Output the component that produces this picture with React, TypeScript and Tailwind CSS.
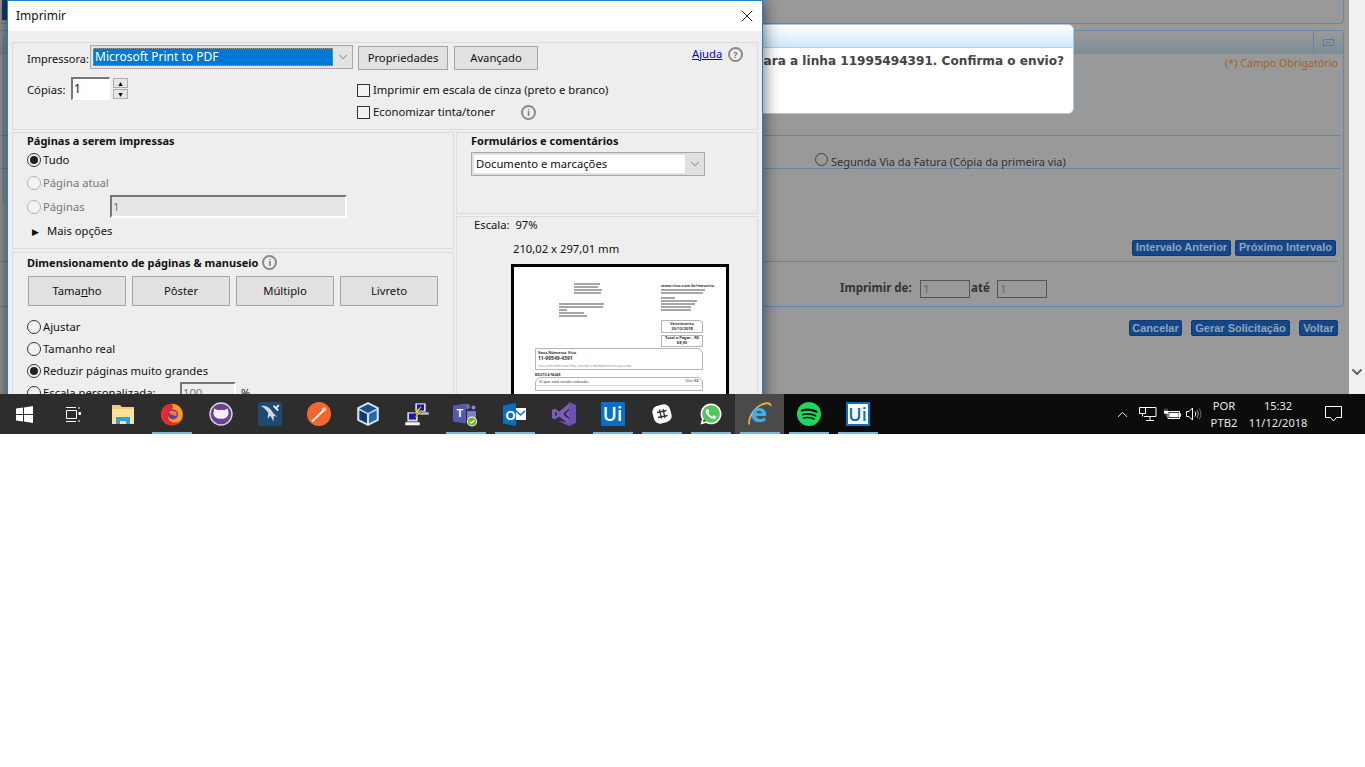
import * as React from "react"
import { ChevronDown, ChevronUp, X } from "lucide-react"
import { FaWhatsapp } from "react-icons/fa"

function Radio({ checked, disabled }: { checked?: boolean; disabled?: boolean }) {
  return (
    <span
      className={
        "flex h-[14px] w-[14px] shrink-0 items-center justify-center rounded-full border " +
        (disabled ? "border-[#b4b4b4] bg-[#f4f4f4]" : "border-[#333333] bg-[#f2f2f2]")
      }
    >
      {checked && <span className="h-2 w-2 rounded-full bg-[#222222]" />}
    </span>
  )
}

function RadioRow({ label, checked, disabled }: { label: string; checked?: boolean; disabled?: boolean }) {
  return (
    <div className={"flex h-[22px] items-center gap-[2px] " + (disabled ? "text-[#777777]" : "")}>
      <Radio checked={checked} disabled={disabled} />
      <span>{label}</span>
    </div>
  )
}

function Check({ label }: { label: string }) {
  return (
    <div className="flex h-[22px] items-center gap-[3px]">
      <span className="h-[13px] w-[13px] shrink-0 border border-[#333333] bg-[#f2f2f2]" />
      <span>{label}</span>
    </div>
  )
}

function InfoIcon({ glyph = "i" }: { glyph?: string }) {
  return (
    <span className="flex h-[15px] w-[15px] shrink-0 items-center justify-center rounded-full border-2 border-[#8a8a8a] text-[9px] leading-none font-bold text-[#777777]">
      {glyph}
    </span>
  )
}

function FlatButton({ className, children }: { className: string; children: React.ReactNode }) {
  return (
    <div className={"flex items-center justify-center border border-[#a4a4a4] bg-[#e1e1e1] " + className}>
      {children}
    </div>
  )
}

function PrintDialog() {
  return (
    <div className="absolute top-0 left-[7px] h-[420px] w-[756px] border-x border-t border-[#1883d7] bg-[#eeeeee] shadow-[0_0_16px_rgba(0,0,0,0.65)]">
      <div className="flex h-[30px] items-center justify-between bg-white pr-[5px] pl-2 text-[12px] text-[#111111]">
        <span>Imprimir</span>
        <X size={20} strokeWidth={1} className="text-black" />
      </div>

      <div className="flex flex-col gap-[2px] pt-[11px] pl-1 text-[11.25px] leading-none text-[#111111]">
        {/* Impressora */}
        <div className="h-[88px] w-[746px] border border-[#dcdcdc] pt-[2px] pl-[14px]">
          <div className="flex items-start">
            <span className="w-[63px] pt-[8px] text-[11px]">Impressora:</span>
            <div className="flex h-[24px] w-[263px] items-center border border-[#a8a8a8] bg-[#e3e3e3] pl-[2px]">
              <span className="flex h-[18px] w-[240px] items-center border border-dotted border-[#f08a24] bg-[#0078d7] pl-[1px] text-[12px] text-white">
                Microsoft Print to PDF
              </span>
              <ChevronDown size={14} strokeWidth={1} className="ml-[3px] text-[#333333]" />
            </div>
            <FlatButton className="mt-[1px] ml-[5px] h-[24px] w-[90px]">Propriedades</FlatButton>
            <FlatButton className="mt-[1px] ml-[6px] h-[24px] w-[84px]">Avançado</FlatButton>
            <a className="mt-[3px] ml-[154px] w-[31px] text-[#0000ee] underline">Ajuda</a>
            <span className="mt-[2px] ml-[5px]"><InfoIcon glyph="?" /></span>
          </div>
          <div className="mt-[7px] flex items-start">
            <div className="flex w-[330px] items-start">
              <span className="w-[44px] pt-[7px]">Cópias:</span>
              <div className="flex h-[23px] w-[39px] items-center border border-t-2 border-l-2 border-[#777777] border-r-white border-b-white bg-white pl-[1px] text-[12px]">
                1
              </div>
              <div className="mt-[1px] ml-[3px] flex flex-col gap-[1px]">
                <span className="flex h-[10px] w-[15px] items-center justify-center border border-[#adadad] bg-[#e6e6e6] text-[7px] text-black">▲</span>
                <span className="flex h-[10px] w-[15px] items-center justify-center border border-[#adadad] bg-[#e6e6e6] text-[7px] text-black">▼</span>
              </div>
            </div>
            <div className="mt-[2px] flex flex-col">
              <Check label="Imprimir em escala de cinza (preto e branco)" />
              <div className="flex items-center">
                <Check label="Economizar tinta/toner" />
                <span className="ml-[26px]"><InfoIcon /></span>
              </div>
            </div>
          </div>
        </div>

        <div className="flex gap-[2px]">
          {/* Coluna esquerda */}
          <div className="flex w-[442px] flex-col gap-[3px]">
            <div className="h-[117px] border border-[#dcdcdc] pl-[14px]">
              <div className="pt-[2px] text-[11px] font-bold">Páginas a serem impressas</div>
              <div className="mt-[3px]"><RadioRow label="Tudo" checked /></div>
              <div className="mt-[1px]"><RadioRow label="Página atual" disabled /></div>
              <div className="mt-[1px] flex items-center">
                <div className="w-[83px]"><RadioRow label="Páginas" disabled /></div>
                <div className="flex h-[23px] w-[237px] items-center border-2 border-[#777777] border-r-white border-b-white bg-[#e6e6e6] pl-[1px] text-[#777777]">
                  1
                </div>
              </div>
              <div className="mt-[4px] flex h-[18px] items-center pl-[5px]">
                <span className="text-[9px] text-black">▶</span>
                <span className="ml-[8px]">Mais opções</span>
              </div>
            </div>
            <div className="h-[150px] border border-[#dcdcdc] pl-[14px]">
              <div className="flex h-[17px] items-center pt-[1px] text-[11px] font-bold">
                <span>Dimensionamento de páginas &amp; manuseio</span>
                <span className="ml-[4px] font-normal"><InfoIcon /></span>
              </div>
              <div className="mt-[6px] flex gap-[6px] pl-[1px]">
                <FlatButton className="h-[30px] w-[98px]">
                  <span>Tama<u>n</u>ho</span>
                </FlatButton>
                <FlatButton className="h-[30px] w-[98px]">Pôster</FlatButton>
                <FlatButton className="h-[30px] w-[98px]">Múltiplo</FlatButton>
                <FlatButton className="h-[30px] w-[98px]">Livreto</FlatButton>
              </div>
              <div className="mt-[10px]"><RadioRow label="Ajustar" /></div>
              <RadioRow label="Tamanho real" />
              <RadioRow label="Reduzir páginas muito grandes" checked />
              <div className="flex items-center">
                <div className="w-[153px]"><RadioRow label="Escala personalizada:" /></div>
                <div className="flex h-[22px] w-[56px] items-center border-2 border-[#777777] border-r-white border-b-white pl-[1px] text-[#777777]">
                  100
                </div>
                <span className="ml-[5px]">%</span>
              </div>
            </div>
          </div>

          {/* Coluna direita */}
          <div className="flex w-[302px] flex-col gap-[2px]">
            <div className="h-[82px] border border-[#dcdcdc] pl-[14px]">
              <div className="pt-[2px] text-[11px] font-bold">Formulários e comentários</div>
              <div className="mt-[6px] flex h-[24px] w-[234px] items-center border border-[#a8a8a8] bg-[#e0e0e0] pl-[2px]">
                <span className="flex h-[18px] w-[211px] items-center bg-white pl-[2px]">Documento e marcações</span>
                <ChevronDown size={14} strokeWidth={1} className="ml-[3px] text-[#333333]" />
              </div>
            </div>
            <div className="h-[180px] border border-[#dcdcdc]">
              <div className="pt-[2px] pl-[17px]">Escala:&nbsp; 97%</div>
              <div className="mt-[13px] pl-[56px]">210,02 x 297,01 mm</div>
              <div className="mt-[9px] ml-[54px] h-[140px] w-[218px] border-[3px] border-black bg-white">
                <PreviewDoc />
              </div>
            </div>
          </div>
        </div>
      </div>
    </div>
  )
}

function Greek({ widths }: { widths: number[] }) {
  return (
    <div className="flex flex-col gap-[1px]">
      {widths.map((w, i) => (
        <div key={i} className="h-[2px] bg-[#a6a6a6]" style={{ width: w }} />
      ))}
    </div>
  )
}

function PreviewDoc() {
  return (
    <div className="relative pt-4 pr-[23px] pl-[21px] text-[4px] leading-[5px] text-[#333333]">
      <div className="flex items-start pl-[39px]">
        <Greek widths={[26, 24, 28, 27]} />
        <div className="ml-[59px] font-bold whitespace-nowrap">
          <div>www.vivo.com.br/meuvivo</div>
          <div className="mt-[1px]"><Greek widths={[44, 42]} /></div>
          <div className="mt-[3px]"><Greek widths={[14, 36, 34, 30, 30]} /></div>
        </div>
      </div>
      <div className="-mt-[8px] w-[60px] pl-[24px]">
        <Greek widths={[45, 44, 8, 25, 28]} />
      </div>
      <div className="mt-[3px] ml-[126px] flex h-[13px] w-[42px] flex-col items-center justify-center rounded-tr border border-[#b5b5b5] text-center font-bold">
        <span className="leading-[4px]">Vencimento</span>
        <span className="leading-[5px]">20/12/2018</span>
      </div>
      <div className="mt-[2px] ml-[126px] flex h-[12px] w-[42px] flex-col items-center justify-center border border-[#b5b5b5] text-center font-bold">
        <span className="leading-[4px]">Total a Pagar - R$</span>
        <span className="leading-[5px]">68,90</span>
      </div>
      <div className="mt-[1px] h-[22px] w-[168px] rounded-tr-md border border-[#b5b5b5] pt-[2px] pl-[2px] font-bold">
        <div className="leading-[4px]">Seus Números Vivo</div>
        <div className="text-[5px] leading-[6px]">11-99549-4391</div>
        <div className="mt-[3px] text-[3px] leading-[4px] font-normal text-[#888888]">Caso você tenha essa linha, consulte o detalhamento da sua conta</div>
      </div>
      <div className="mt-[3px] text-[3px] leading-[4px] font-bold">BOLETO A PAGAR</div>
      <div className="h-[14px] w-[168px] rounded-t-md border border-[#b5b5b5]">
        <div className="flex h-[8px] items-center justify-between border-b border-[#dddddd] px-[3px]">
          <span>O que está sendo cobrado</span>
          <span className="text-[3px]">Valor (R$)</span>
        </div>
      </div>
    </div>
  )
}

function PageBehind() {
  return (
    <div className="flex h-[394px] w-[1349px] flex-col bg-[#999999] text-[11px] leading-none text-[#333333]">
      <div className="h-6 w-[1344px] rounded-br border-r border-b border-[#6785a8]" />
      <div className="mt-[6px] h-[277px] w-[1344px] rounded-tr rounded-br border-r border-b border-[#6785a8]">
        <div className="flex h-[24px] justify-end border-t border-[#6785a8] bg-gradient-to-b from-[#9a9a9a] to-[#7e8c93]">
          <div className="flex w-[30px] items-center justify-center border-l border-[#6785a8]">
            <span className="flex h-[7px] w-[11px] items-center justify-center border border-[#5a7da5]">
              <span className="h-px w-[5px] bg-[#5a7da5]" />
            </span>
          </div>
        </div>
        <div className="pt-[4px] pr-[5px] text-right text-[10.75px] text-[#a2641c]">(*) Campo Obrigatório</div>
        <div className="mt-[66px] mr-[2px] border-b border-[#6785a8]" />
        <div className="flex h-[32px] items-end pb-[1px] pl-[815px]">
          <span className="mb-[1px] h-[13px] w-[13px] rounded-full border border-[#444444]" />
          <span className="ml-[3px]">Segunda Via da Fatura (Cópia da primeira via)</span>
        </div>
        <div className="mr-[2px] border-b border-[#6785a8]" />
        <div className="mt-[71px] flex justify-end gap-[4px] pr-[7px]">
          <PageButton className="w-[99px]">Intervalo Anterior</PageButton>
          <PageButton className="w-[101px]">Próximo Intervalo</PageButton>
        </div>
        <div className="mt-[5px] mr-[5px] border-b border-[#6785a8]" />
        <div className="flex h-[36px] items-start pt-[20px] pl-[840px] text-[11.5px] font-bold">
          <span className="w-[80px]">Imprimir de:</span>
          <span className="-mt-[2px] flex h-[18px] w-[50px] items-center border border-[#555555] pl-[2px] font-normal text-[#666666]">1</span>
          <span className="w-[27px] pl-px">até</span>
          <span className="-mt-[2px] flex h-[18px] w-[50px] items-center border border-[#555555] pl-[2px] font-normal text-[#666666]">1</span>
        </div>
      </div>
      <div className="mt-[13px] flex justify-end gap-[9px] pr-[11px]">
        <PageButton className="w-[53px]">Cancelar</PageButton>
        <PageButton className="w-[99px]">Gerar Solicitação</PageButton>
        <PageButton className="w-[39px]">Voltar</PageButton>
      </div>
    </div>
  )
}

function PageButton({ className, children }: { className: string; children: React.ReactNode }) {
  return (
    <span className={"flex h-[16px] items-center justify-center rounded-[2px] border border-[#0c3a74] bg-[#14478a] font-['Liberation_Sans',sans-serif] text-[11px] font-bold text-[#93a2b6] " + className}>
      {children}
    </span>
  )
}

function MessageBox() {
  return (
    <div className="absolute top-6 left-[300px] h-[90px] w-[774px] overflow-hidden rounded-md border border-[#a9c9ea] bg-white">
      <div className="h-[23px] border-b border-[#a9d3ee] bg-gradient-to-b from-white to-[#cde8f7]" />
      <div className="pt-[4px] pr-[9px] text-right font-['DejaVu_Sans',sans-serif] text-[12.1px] font-bold text-[#444444]">
        para a linha 11995494391. Confirma o envio?
      </div>
    </div>
  )
}

/* icones da barra de tarefas */
const icons: { key: string; on?: boolean; active?: boolean; node: React.ReactNode }[] = [
  {
    key: "start",
    node: (
      <svg width="17" height="17" viewBox="0 0 17 17" fill="#fff">
        <path d="M0 2.600 7 1.600v6.300H0zM8 1.400 17 0v7.900H8zM0 9h7v6.400l-7-1zM8 9h9v8l-9-1.400z" />
      </svg>
    ),
  },
  {
    key: "taskview",
    node: (
      <svg width="17" height="17" viewBox="0 0 17 17" fill="none" stroke="#fff" strokeWidth="1">
        <path d="M1 1.500h10M1 15.500h10M1.500 4.500h10v8h-10zM14 1v2M14 14v2" />
        <rect x="13.500" y="6" width="2.500" height="3" fill="#fff" stroke="none" />
      </svg>
    ),
  },
  {
    key: "explorer",
    node: (
      <svg width="22" height="20" viewBox="0 0 22 20">
        <path d="M0 1h8l2 2h12v17H0z" fill="#f5cf6c" />
        <path d="M0 5h22v15H0z" fill="#fbe29a" />
        <path d="M4 13h14v7h-4v-3H8v3H4z" fill="#2f9fe0" />
      </svg>
    ),
  },
  {
    key: "firefox",
    on: true,
    node: (
      <svg width="24" height="24" viewBox="0 0 24 24">
        <circle cx="12" cy="12.500" r="10.800" fill="#ff9a1f" />
        <path d="M12 1.700a10.800 10.800 0 0 0-9 16.700c2.200 3 5.500 4.900 9 4.900 4 0 7.500-2 9.300-5.300-3 3-7.300 3.500-10.300 1.700-3-1.900-3.800-5.200-2.600-8 .7-1.500 2-2.700 3.600-3.200l1-3.800z" fill="#e8262d" />
        <circle cx="13" cy="12.500" r="5" fill="#5b3ea8" />
        <path d="M9 10c2-1.500 5-2 7 0 1 1.300 1 3 0 4.300-1.500-1-3-1-5-1.800-1-.5-1.700-1.300-2-2.500z" fill="#ff7a1f" />
      </svg>
    ),
  },
  {
    key: "cat",
    node: (
      <svg width="24" height="24" viewBox="0 0 24 24">
        <circle cx="12" cy="12" r="11" fill="#6d3f92" stroke="#d9d5de" strokeWidth="1.400" />
        <path d="M5 8.500V6.500l3.500 1.500h7L19 6.500v2c1 3 .5 5-1 6.500-1.500 1.300-3.500 1.800-6 1.800s-4.500-.5-6-1.800c-1.500-1.500-2-3.500-1-6.500z" fill="#f2eff5" />
      </svg>
    ),
  },
  {
    key: "mysql",
    node: (
      <svg width="24" height="24" viewBox="0 0 24 24">
        <rect width="24" height="24" rx="3" fill="#1f4a70" />
        <path d="M3 4c4-.8 8 1 10.500 4.500 1.500 2.200 3 4.500 5.500 6-1.500 0-2.500-.3-3.500-.8.500 1.800.3 3.800-.5 6-.3-2.500-1.300-4.500-3-6-1 .8-1.500 2-1.800 3.300-.8-2-.5-4 .3-5.500C9 8.500 6.500 6 3 4z" fill="#cfdce8" />
        <path d="m16 3 2 2 2-2.500 1.500 1.200-2.300 2.300 1.500 2-1.200 1.200L15 4.500z" fill="#eef3f8" />
      </svg>
    ),
  },
  {
    key: "pen",
    node: (
      <svg width="24" height="24" viewBox="0 0 24 24">
        <circle cx="12" cy="12" r="12" fill="#f4662d" />
        <path d="M5 19.500 17 8" stroke="#fff" strokeWidth="1.800" />
        <path d="m14.500 7 3 3 2-3-2-2z" fill="#ffd9c8" />
      </svg>
    ),
  },
  {
    key: "vbox",
    node: (
      <svg width="24" height="26" viewBox="0 0 22 24">
        <path d="M11 1 21 6v12l-10 5L1 18V6z" fill="#d5dee9" />
        <path d="M11 3 19 7l-8 4-8-4z" fill="#164f8c" />
        <path d="M3 8.500 10 12v8.500L3 17z" fill="#0d3a6b" />
        <path d="M19 8.500 12 12v8.500l7-3.500z" fill="#1f6bb3" />
      </svg>
    ),
  },
  {
    key: "putty",
    node: (
      <svg width="24" height="24" viewBox="0 0 24 24">
        <path d="M10 1h11v10H10z" fill="#d8d8d8" stroke="#333" strokeWidth=".6" />
        <path d="M12 2.500h7v6h-7z" fill="#1616b8" />
        <path d="M14 10h10v3H14z" fill="#bbb" stroke="#333" strokeWidth=".5" />
        <path d="M2 10h11v10H2z" fill="#d8d8d8" stroke="#333" strokeWidth=".6" />
        <path d="M4 11.500h7v6H4z" fill="#1616b8" />
        <path d="M0 20h15v3.500H0z" fill="#f4f4f4" stroke="#333" strokeWidth=".5" />
        <path d="m16 4-7 7h4l-5 6 9-7h-4l4-6z" fill="#fff02a" stroke="#111" strokeWidth=".4" />
      </svg>
    ),
  },
  {
    key: "teams",
    on: true,
    node: (
      <svg width="25" height="25" viewBox="0 0 25 25" fontFamily="'Liberation Sans',sans-serif">
        <circle cx="14.500" cy="4.500" r="2.500" fill="#6d70b8" />
        <circle cx="20.500" cy="5.500" r="2" fill="#8a8dce" />
        <path d="M14 9h9v8h-9z" fill="#7c7fc6" />
        <path d="M0 3.500 13 1.500v20L0 19.500z" fill="#5558af" />
        <text x="3.500" y="15" fontSize="11" fontWeight="700" fill="#fff">T</text>
        <circle cx="19" cy="19.500" r="5" fill="#fff" />
        <circle cx="19" cy="19.500" r="4" fill="#6bb324" />
        <path d="m16.800 19.500 1.700 1.700 2.800-3" fill="none" stroke="#fff" strokeWidth="1.200" />
      </svg>
    ),
  },
  {
    key: "outlook",
    on: true,
    node: (
      <svg width="23" height="23" viewBox="0 0 23 23" fontFamily="'Liberation Sans',sans-serif">
        <path d="M11 5h12v12H11z" fill="#fff" />
        <path d="m13 7 4.500 4L22 7v2l-4.500 4L13 9z" fill="#0f78c8" />
        <path d="M0 2.500 13 0v23L0 20.500z" fill="#0a6fc2" />
        <text x="2.500" y="16.500" fontSize="13" fontWeight="700" fill="#fff">O</text>
      </svg>
    ),
  },
  {
    key: "vs",
    node: (
      <svg width="24" height="24" viewBox="0 0 24 24">
        <path d="M17 0 24 3v18l-7 3-11-5 11 1z" fill="#6f4fb0" />
        <path d="m0 8 3-1.500 4 3.200L17 1.500v5L11 12l6 5.500v4L7 14.500 3 17.500 0 16zm3 1.500v5L5.500 12zM17 8l-3.500 4 3.500 3.500z" fill="#7d5cc0" fillRule="evenodd" />
      </svg>
    ),
  },
  {
    key: "ui1",
    on: true,
    node: (
      <span className="flex h-6 w-6 items-center justify-center bg-[#0a6fc2] font-['Open_Sans',sans-serif] text-[19px] leading-none font-semibold text-white">
        Ui
      </span>
    ),
  },
  {
    key: "slack",
    on: true,
    node: (
      <svg width="20" height="20" viewBox="0 0 20 20">
        <rect x="1" y="1" width="18" height="18" rx="6" fill="#fff" transform="rotate(-15 10 10)" />
        <path d="M7.500 5.500 9.500 14.500M11 5 13 14M5 8.500 14.500 6.500M6 13.500 15.500 11.500" stroke="#333" strokeWidth="1.300" />
      </svg>
    ),
  },
  {
    key: "whatsapp",
    on: true,
    node: (
      <span className="relative flex h-6 w-6 items-center justify-center">
        <span className="absolute top-[3px] left-[3px] h-[18px] w-[18px] rounded-full bg-[#4cc95a]" />
        <FaWhatsapp size={24} color="#fff" className="relative" />
      </span>
    ),
  },
  {
    key: "ie",
    on: true,
    active: true,
    node: (
      <svg width="24" height="24" viewBox="0 0 24 24" fontFamily="'DejaVu Sans',sans-serif">
        <path d="M1.500 22.500C-.5 18 5 7 13 3c5-2.500 10-2.500 9.500 1" fill="none" stroke="#e6b12e" strokeWidth="1.800" />
        <text x="3" y="19.500" fontSize="24" fontWeight="700" fill="#3ab0e8">e</text>
      </svg>
    ),
  },
  {
    key: "spotify",
    on: true,
    node: (
      <svg width="24" height="24" viewBox="0 0 24 24" fill="none" stroke="#111" strokeLinecap="round">
        <circle cx="12" cy="12" r="12" fill="#1ed760" stroke="none" />
        <path d="M5 8.500c5-1.300 10-1 14.500 1.300" strokeWidth="2.200" />
        <path d="M6 12.500c4-1 9-.8 12.500 1.200" strokeWidth="1.800" />
        <path d="M6.500 16c3.500-.8 7.500-.6 10.500 1" strokeWidth="1.500" />
      </svg>
    ),
  },
  {
    key: "ui2",
    on: true,
    node: (
      <span className="flex h-6 w-6 items-center justify-center border-2 border-[#0a6fc2] bg-white font-['Open_Sans',sans-serif] text-[18px] leading-none font-semibold text-[#0a6fc2]">
        Ui
      </span>
    ),
  },
]

function Taskbar() {
  return (
    <div className="flex h-10 w-[1365px] bg-[#0c0c0c]">
      <div className="flex bg-[#2d2d2d]">
        {icons.slice(0, 15).map((it) => <TaskIcon key={it.key} item={it} />)}
      </div>
      {icons.slice(15).map((it) => <TaskIcon key={it.key} item={it} />)}

      <div className="flex flex-1 items-center pl-[232px] text-[11.25px] text-[#e8e8e8]">
        <ChevronUp size={17} strokeWidth={1.300} className="text-white" />
        <svg width="18" height="16" viewBox="0 0 18 16" fill="none" stroke="#fff" className="ml-[8px]">
          <path d="M5 1.500h12v9H5M11 10.500v3.500M7 14.500h8M.5 1.500h6v6h-6zM3.500 7.500v3" />
        </svg>
        <svg width="17" height="12" viewBox="0 0 17 12" className="ml-[7px]">
          <path d="M4 3.500h11.500v7H4z" fill="none" stroke="#fff" />
          <path d="M5.500 5h9v4h-9zM16 5.500h1v3h-1zM0 3h4v2.500H0zM1 .5v2.500M3 .5v2.500M2 5.500v3" fill="#fff" stroke="#fff" strokeWidth=".4" />
        </svg>
        <svg width="16" height="14" viewBox="0 0 16 14" fill="none" stroke="#fff" className="ml-[5px]">
          <path d="M.5 4.500h2.500L6.500 1v12L3 9.500H.5z" />
          <path d="M9 4.500c1 1.500 1 3.500 0 5" />
          <path d="M11 3c1.700 2.500 1.700 5.500 0 8" opacity=".6" />
          <path d="M13 1.500c2.500 3.500 2.500 7.500 0 11" opacity=".4" />
        </svg>
        <div className="ml-[7px] flex w-[30px] flex-col items-center gap-[6px] leading-none">
          <span>POR</span>
          <span>PTB2</span>
        </div>
        <div className="ml-[9px] flex w-[60px] flex-col items-center gap-[6px] text-[11px] leading-none">
          <span>15:32</span>
          <span className="whitespace-nowrap">11/12/2018</span>
        </div>
        <svg width="17" height="16" viewBox="0 0 17 16" fill="none" stroke="#fff" className="ml-[17px]">
          <path d="M.5.500h16v11h-5L8.500 15l-3-3.500h-5z" />
        </svg>
      </div>
    </div>
  )
}

function TaskIcon({ item }: { item: (typeof icons)[number] }) {
  return (
    <div className={"relative flex h-10 w-[49px] items-center justify-center " + (item.active ? "bg-[#4a4a4a]" : "")}>
      {item.node}
      {item.on && <span className="absolute right-1 bottom-0 left-[5px] h-[2px] bg-[#76b9ed]" />}
    </div>
  )
}

export default function App() {
  return (
    <div className="h-[767px] w-[1365px] overflow-hidden bg-white font-['Noto_Sans',sans-serif]">
      <div className="relative flex h-[394px] overflow-hidden bg-[#f0f0f0]">
        <PageBehind />
        <div className="relative flex w-4 items-end justify-center pb-[14px]">
          <ChevronDown size={16} strokeWidth={3} className="text-[#666666]" />
        </div>
        <div className="absolute top-0 left-[2px] h-5 w-[5px] bg-[#123d78]" />
        <div className="absolute top-[36px] left-[3px] h-[167px] w-[4px] rounded-l border-l border-[#6785a8]" />
        <MessageBox />
        <PrintDialog />
      </div>
      <Taskbar />
    </div>
  )
}
